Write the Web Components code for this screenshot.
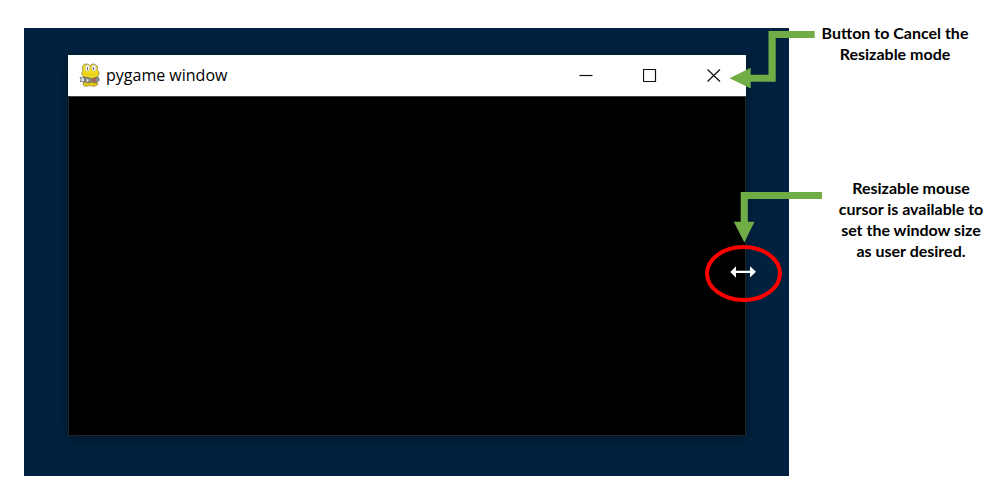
<!DOCTYPE html>
<html lang="en">
<head>
<meta charset="utf-8">
<meta name="viewport" content="width=device-width, initial-scale=1">
<title>Resizable pygame window</title>
<style>
  body { margin: 0; background: #fff; }
</style>
</head>
<body>
<guide-page>
  <desk-top slot="desktop">
    <app-window caption="pygame window"></app-window>
    <callout-marks slot="marks"></callout-marks>
  </desk-top>
  <callout-note slot="notes">Button to Cancel the<br>Resizable mode</callout-note>
  <callout-note slot="notes" class="resize">Resizable mouse<br>cursor is available to<br>set the window size<br>as user desired.</callout-note>
</guide-page>

<template id="guide-page">
  <style>
    :host { display: grid; grid-template-columns: minmax(0, 1fr) 212px; padding: 28px 0 21px 24px; }
    .notes { display: flex; flex-direction: column; gap: 113px; margin-top: -6px; }
    ::slotted(.resize) { padding-left: 32px; }
  </style>
  <slot name="desktop"></slot>
  <aside class="notes"><slot name="notes"></slot></aside>
</template>

<template id="desk-top">
  <style>
    :host { display: block; position: relative; padding: 27px 43px 40px 44px; background: #002240; }
  </style>
  <slot></slot>
  <slot name="marks"></slot>
</template>

<template id="app-window">
  <style>
    :host { display: block; box-shadow: 0 3px 14px rgba(0, 0, 0, .4); }
    header { display: flex; align-items: center; box-sizing: border-box; height: 41px; background: #fff; padding: 0 0 1px 11px; }
    h1 { flex: 1; margin: 0 0 0 5px; font: 400 16px/22px "Open Sans", "Noto Sans", sans-serif; color: #000; }
    .logo { width: 22px; height: 24px; }
    button { width: 64px; height: 40px; padding: 0; border: 0; background: none; display: grid; place-items: center; }
    button svg { width: 14px; height: 14px; fill: none; stroke: #111; stroke-width: 1.2; }
    svg { display: block; }
    main { box-sizing: border-box; min-height: 340px; background: #000; border: 1px solid #252525; border-top-color: #444; }
  </style>
  <header>
    <svg class="logo" viewBox="0 0 22 24" aria-hidden="true">
      <path d="M5 17L4 22l3 1.500 4-1 4 1 4-2-3-5z" fill="#e8ca16" stroke="#77702d" stroke-width=".6"/>
      <path d="M4 8C2.500 4 4 1 7 1c2 0 3 .6 4 2 1-2 3-2.500 5-1.500 3 1 3 3.500 2 5.500 3 2.500 2.500 6-1 7.500-4 2-9 2-12-.5-2.500-2-3-4-1-6z" fill="#f3dc1c" stroke="#77712f" stroke-width=".7"/>
      <ellipse cx="8.500" cy="5" rx="2.500" ry="3.200" fill="#eee" stroke="#a59d64" stroke-width=".4"/>
      <ellipse cx="15" cy="5" rx="2.300" ry="3.200" fill="#eee" stroke="#a59d64" stroke-width=".4"/>
      <path d="M8.500 4.500v2M14.500 4.500v2" stroke="#444" stroke-width="1"/>
      <path d="M5 10.500c4 2 8 2 13 0" fill="none" stroke="#c9b21a" stroke-width=".6"/>
      <path d="M4 14l5 .5 4 1 6-1.500 1.500 3-3 3-5-1-4 1-4-2z" fill="#8b8b83" stroke="#5b5b55" stroke-width=".6"/>
      <path d="M1 14l2 1 2-2v3l2 1-2 1v2l-2-2-2 1 1-2z" fill="#ddd" stroke="#444" stroke-width=".6"/>
      <path d="M13 16l4-1v3l-3 1z" fill="#b55b55"/>
      <path d="M7 16l3 1-2 2z" fill="#e4e4e4"/>
    </svg>
    <h1></h1>
    <button type="button" aria-label="Minimize"><svg viewBox="0 0 14 14"><path d="M.5 7.500h13"/></svg></button>
    <button type="button" aria-label="Maximize"><svg viewBox="0 0 14 14"><path d="M.5 1.500h12v12H.5z"/></svg></button>
    <button type="button" aria-label="Close"><svg viewBox="0 0 14 14"><path d="M.5 1.500l12.500 12M13 1.500L.5 13.500"/></svg></button>
  </header>
  <main></main>
</template>

<template id="callout-marks">
  <style>
    :host { position: absolute; top: 0; right: -33px; width: 120px; height: 280px; pointer-events: none; }
    svg { display: block; width: 100%; height: 100%; }
  </style>
  <svg viewBox="702 28 120 280" aria-hidden="true">
    <g fill="#70ad47">
      <path d="M814.700 31v7H775.700V81.700H750.700V88.500L729.500 78.200 750.700 67.700V74.700H768.500V31z"/>
      <path d="M822 192v7H747.800V221.700H754.500L744.300 242.500 733.800 221.700H740.700V192z"/>
    </g>
    <ellipse cx="743.500" cy="273.500" rx="36.500" ry="26.500" fill="none" stroke="#f00" stroke-width="4"/>
    <path d="M730.300 272l5.700-5.700v4.500h14v-4.500l6 5.500-6 5.700v-4.400h-14v4.600z" fill="#fff"/>
  </svg>
</template>

<template id="callout-note">
  <style>
    :host { display: block; font: 700 16px/21px Lato, "Open Sans", sans-serif; color: #000; text-align: center; }
    p { margin: 0; }
  </style>
  <p><slot></slot></p>
</template>

<script>
  class TemplateElement extends HTMLElement {
    constructor() {
      super();
      this.attachShadow({ mode: "open" })
        .append(document.getElementById(this.localName).content.cloneNode(true));
    }
  }
  customElements.define("guide-page", class extends TemplateElement {});
  customElements.define("desk-top", class extends TemplateElement {});
  customElements.define("app-window", class extends TemplateElement {
    connectedCallback() {
      this.shadowRoot.querySelector("h1").textContent = this.getAttribute("caption");
    }
  });
  customElements.define("callout-marks", class extends TemplateElement {});
  customElements.define("callout-note", class extends TemplateElement {});
</script>
</body>
</html>
